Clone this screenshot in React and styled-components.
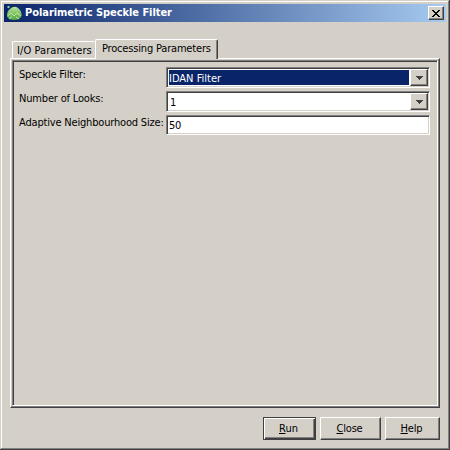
import React from "react";
import styled, { createGlobalStyle, css } from "styled-components";

const face = "#d4d0c8";
const shadow = "#808080";
const dark = "#404040";

const Global = createGlobalStyle`
  * { box-sizing: border-box; }
  body { margin: 0; background: ${face}; }
`;

const raised = css`
  border: 1px solid;
  border-color: #fff ${dark} ${dark} #fff;
  box-shadow: inset -1px -1px ${shadow};
`;

const Dialog = styled.div`
  width: 450px;
  height: 450px;
  padding: 4px;
  display: flex;
  flex-direction: column;
  background: ${face};
  font: 11px/14px "DejaVu Sans Condensed", "DejaVu Sans", sans-serif;
  font-stretch: condensed;
  color: #000;
  white-space: nowrap;
  box-shadow: inset -1px -1px ${dark}, inset 1px 1px ${face},
    inset -2px -2px ${shadow}, inset 2px 2px #fff;
`;

const TitleBar = styled.header`
  height: 18px;
  flex: none;
  display: flex;
  align-items: center;
  padding: 0 2px;
  color: #fff;
  font-weight: bold;
  background: linear-gradient(90deg, #0a246a, #a6caf0);
  svg { flex: none; }
`;

const Text = styled.span`
  letter-spacing: ${(p) => p.$spacing ?? -0.18}px;
`;

const Title = styled(Text)`
  flex: 1;
  padding-left: 3px;
`;

const CloseBox = styled.button`
  ${raised}
  width: 16px;
  height: 14px;
  padding: 0;
  display: grid;
  place-items: center;
  background: ${face};
`;

const Tabs = styled.nav`
  display: flex;
  align-items: flex-end;
  height: 19px;
  margin: 17px 0 0 8px;
  flex: none;
`;

const Tab = styled.div`
  flex: none;
  width: ${(p) => p.$width}px;
  height: ${(p) => (p.$active ? 20 : 17)}px;
  margin-bottom: ${(p) => (p.$active ? -1 : 0)}px;
  padding: ${(p) => (p.$active ? "2px 0 0 6px" : "2px 0 0 4px")};
  position: relative;
  background: ${face};
  border: 1px solid #fff;
  border-bottom: 0;
  border-right: ${(p) => (p.$active ? `1px solid ${dark}` : 0)};
  border-radius: 2px 2px 0 0;
  box-shadow: ${(p) => (p.$active ? `inset -1px 0 ${shadow}` : "none")};
`;

const Panel = styled.main`
  width: 430px;
  height: 350px;
  margin-left: 6px;
  flex: none;
  padding: 1px;
  border: 1px solid;
  border-color: #fff ${dark} ${dark} #fff;
  box-shadow: inset -1px -1px ${shadow};
`;

const PanelInner = styled.div`
  width: 426px;
  height: 346px;
  border: 1px solid;
  border-color: ${shadow} #fff #fff ${shadow};
  box-shadow: inset 1px 1px ${dark};
  padding: 6px 0 0 6px;
`;

const Row = styled.label`
  display: flex;
  height: 24px;
`;

const RowLabel = styled(Text)`
  width: 147px;
  flex: none;
  padding-top: 1px;
`;

const Field = styled.div`
  width: 264px;
  height: ${(p) => p.$height || 21}px;
  display: flex;
  padding: 1px;
  background: #fff;
  border: 1px solid;
  border-color: ${shadow} #fff #fff ${shadow};
  box-shadow: inset 1px 1px ${dark}, inset -1px -1px ${face};
`;

const Value = styled.div`
  flex: 1;
  margin: 1px;
  padding: ${(p) => p.$pad || "2px 0 0 0"};
  background: ${(p) => (p.$selected ? "#0a246a" : "#fff")};
  color: ${(p) => (p.$selected ? "#fff" : "#000")};
`;

const Drop = styled.span`
  ${raised}
  width: 18px;
  flex: none;
  display: grid;
  place-items: center;
  background: ${face};
`;

const Footer = styled.footer`
  display: flex;
  justify-content: flex-end;
  gap: 4px;
  margin: 9px 6px 0 0;
`;

const Button = styled.button`
  ${raised}
  height: 23px;
  width: ${(p) => p.$width}px;
  padding: 0 2px 0 0;
  font: inherit;
  color: #000;
  background: ${face};
  ${(p) =>
    p.$default &&
    css`
      border-color: ${dark};
      box-shadow: inset 1px 1px #fff, inset -1px -1px ${dark}, inset -2px -2px ${shadow};
    `}
  u { text-underline-offset: 1px; text-decoration-thickness: 1px; }
`;

function AppIcon() {
  return (
    <svg width="16" height="16" viewBox="0 0 16 16">
      <defs>
        <linearGradient id="leaf" x1="0" y1="0" x2="0" y2="1">
          <stop offset="0" stopColor="#b4e39c" />
          <stop offset=".55" stopColor="#7cc25f" />
          <stop offset="1" stopColor="#55a545" />
        </linearGradient>
      </defs>
      <path d="M4 4Q8 0 12 3Q16 6 15.5 11Q14 15 8 15Q2 15 1 11Q1 6 4 4Z" fill="url(#leaf)" />
      <circle cx="2.5" cy="2" r="1.2" fill="#8fc8a0" />
      <path d="M1.5 11L5 8L8 11L11 8L15 11M3 14L6 11.5M10 12L13 14" fill="none" stroke="#c6e8b2" strokeWidth=".9" />
    </svg>
  );
}

function Arrow() {
  return (
    <Drop>
      <svg width="7" height="4" shapeRendering="crispEdges">
        <path d="M0 0H7V1H6V2H5V3H4V4H3V3H2V2H1V1H0Z" fill={dark} />
      </svg>
    </Drop>
  );
}

export default function App() {
  return (
    <>
      <Global />
      <Dialog>
        <TitleBar>
          <AppIcon />
          <Title $spacing={-0.06}>Polarimetric Speckle Filter</Title>
          <CloseBox aria-label="Close">
            <svg width="8" height="7" shapeRendering="crispEdges">
              <path d="M0 0H2V1H3V2H5V1H6V0H8V1H7V2H6V3H5V4H6V5H7V6H8V7H6V6H5V5H3V6H2V7H0V6H1V5H2V4H3V3H2V2H1V1H0Z" />
            </svg>
          </CloseBox>
        </TitleBar>
        <Tabs>
          <Tab $width={83}><Text $spacing={0.07}>I/O Parameters</Text></Tab>
          <Tab $width={123} $active><Text>Processing Parameters</Text></Tab>
        </Tabs>
        <Panel>
          <PanelInner>
            <Row>
              <RowLabel>Speckle Filter:</RowLabel>
              <Field><Value $selected><Text $spacing={0}>IDAN Filter</Text></Value><Arrow /></Field>
            </Row>
            <Row>
              <RowLabel>Number of Looks:</RowLabel>
              <Field><Value $pad="2px 0 0 1px">1</Value><Arrow /></Field>
            </Row>
            <Row>
              <RowLabel>Adaptive Neighbourhood Size:</RowLabel>
              <Field $height={20}><Value $pad="1px 0 0"><Text>50</Text></Value></Field>
            </Row>
          </PanelInner>
        </Panel>
        <Footer>
          <Button $width={53} $default><Text $spacing={0}><u>R</u>un</Text></Button>
          <Button $width={61}><Text><u>C</u>lose</Text></Button>
          <Button $width={55}><Text><u>H</u>elp</Text></Button>
        </Footer>
      </Dialog>
    </>
  );
}
